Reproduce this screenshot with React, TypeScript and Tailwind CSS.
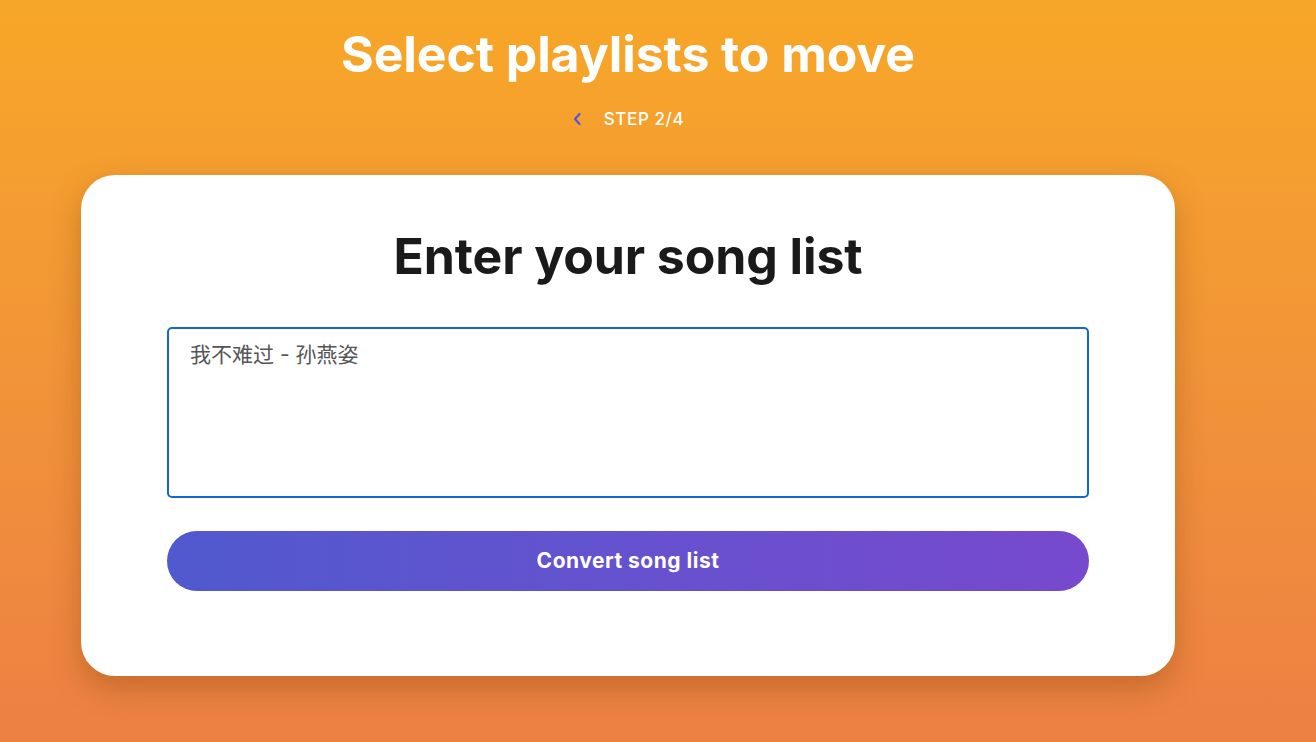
import { useState } from 'react';

const App = () => {
  const [songs, setSongs] = useState('我不难过 - 孙燕姿');

  return (
    <div
      className="min-h-[742px] w-full bg-gradient-to-b from-[#f7a726] to-[#ec8043] pr-[60px]"
      style={{ fontFamily: 'Inter, "Noto Sans CJK SC", sans-serif' }}
    >
      <div className="flex flex-col items-center pt-[24px]">
        <h1 className="text-[50px] font-bold leading-[60px] tracking-[-0.1px] text-white">
          Select playlists to move
        </h1>

        <div className="mt-[25px] flex items-center gap-[22px]">
          <button className="flex h-[20px] w-[10px] items-center justify-center">
            <svg width="10" height="14" viewBox="0 0 10 14" fill="none">
              <path d="M7.5 2 L3 7 L7.5 12" stroke="#5b54d9" strokeWidth="2.2" strokeLinecap="round" strokeLinejoin="round" />
            </svg>
          </button>
          <span className="text-[17px] font-medium leading-[20px] tracking-[0.6px] text-white">STEP 2/4</span>
        </div>

        <div className="mt-[46px] w-[1094px] rounded-[34px] bg-white px-[86px] pb-[85px] pt-[52px] shadow-[0_12px_30px_rgba(120,60,0,0.35)]">
          <h2 className="text-center text-[50px] font-bold leading-[58px] tracking-[-0.1px] text-[#1a1a1a]">
            Enter your song list
          </h2>

          <textarea
            value={songs}
            onChange={(e) => setSongs(e.target.value)}
            className="mt-[42px] block h-[171px] w-full resize-none rounded-[5px] border-2 border-[#1266d4] px-[21px] pb-[14px] pt-[12px] text-[21px] leading-[28px] text-[#555] outline-none"
          />

          <button className="mt-[33px] flex h-[60px] w-full items-center justify-center rounded-full bg-gradient-to-r from-[#5059cf] to-[#7749cd] text-[21px] font-bold tracking-[0.5px] text-white">
            Convert song list
          </button>
        </div>
      </div>
    </div>
  );
};

export default App;
